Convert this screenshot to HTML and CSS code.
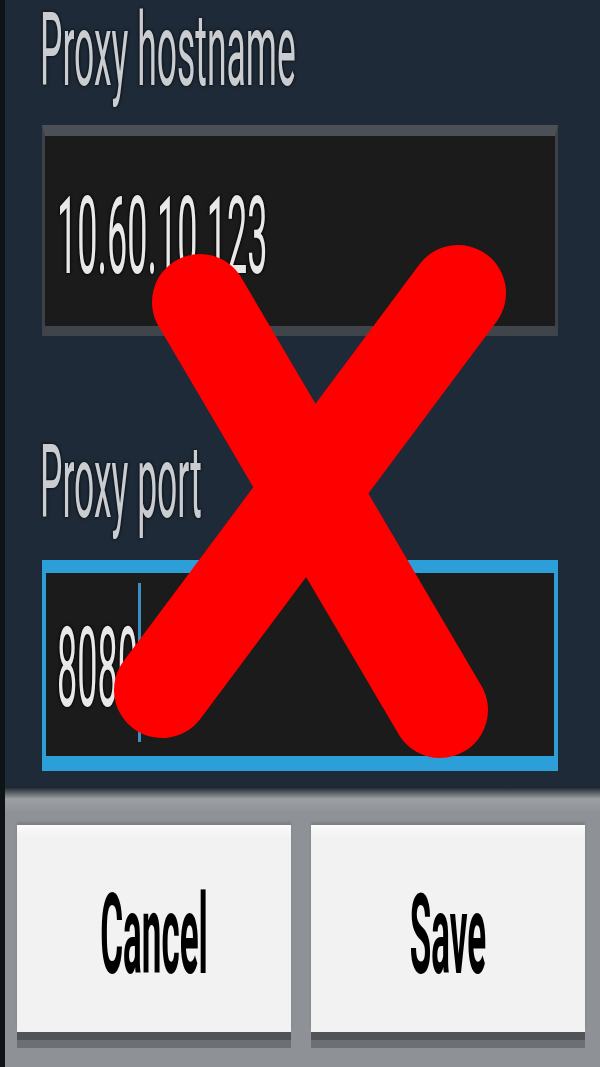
FILE: index.html
```html
<!DOCTYPE html>
<html lang="en">
<head>
    <meta charset="UTF-8">
    <meta name="viewport" content="width=device-width, initial-scale=1.0">
    <title>Proxy settings</title>
    <link rel="stylesheet" href="styles.css">
</head>
<body>
    <div class="page">
        <div class="screen">
            <div class="content">
                <label class="field-label first" for="proxy-host"><span>Proxy hostname</span></label>
                <div class="field" id="proxy-host">
                    <span class="field-text">10.60.10.123</span>
                </div>

                <label class="field-label second" for="proxy-port"><span>Proxy port</span></label>
                <div class="field focused" id="proxy-port">
                    <span class="field-text">8080</span>
                    <span class="cursor"></span>
                </div>
            </div>

            <div class="buttons">
                <button type="button"><span>Cancel</span></button>
                <button type="button"><span>Save</span></button>
            </div>
        </div>

        <!-- big red cross drawn over the dialog -->
        <svg class="cross" viewBox="0 0 600 1067" width="600" height="1067">
            <line x1="200" y1="302" x2="440" y2="710" />
            <line x1="458" y1="293" x2="162" y2="690" />
        </svg>
    </div>
</body>
</html>
```

FILE: styles.css
```css
* {
    box-sizing: border-box;
    margin: 0;
    padding: 0;
}

html, body {
    width: 600px;
    height: 1067px;
    overflow: hidden;
}

body {
    font-family: Roboto, "Noto Sans", Arial, sans-serif;
    background-color: #1e2a37;
}

.page {
    position: relative;
    width: 600px;
    height: 1067px;
}

.screen {
    display: flex;
    flex-direction: column;
    height: 100%;
    border-left: 5px solid #0e1318;
}

.content {
    display: flex;
    flex-direction: column;
    height: 787px;
    padding: 0 42px 0 37px;
    background-color: #1e2a37;
}

.field-label {
    display: block;
    margin-left: -2px;
    color: #c9cdd1;
}

.field-label span {
    display: inline-block;
    font-size: 35.5px;
    line-height: 1;
    transform: scaleY(2.85);
    transform-origin: 0 0;
    text-shadow: 0 0 2px #000;
}

.field-label.first {
    height: 125px;
    padding-top: 2px;
}

.field-label.second {
    height: 224px;
    padding-top: 98px;
}

.field {
    display: flex;
    align-items: flex-start;
    height: 211px;
    padding-left: 12px;
    background-color: #1b1b1b;
    border: 3px solid #3c4248;
    border-top: 11px solid #4a5056;
    border-bottom: 10px solid #3f454b;
}

.field-text {
    display: inline-block;
    margin-top: 47px;
    font-size: 36px;
    line-height: 1;
    color: #e8e8e8;
    transform: scaleY(3);
    transform-origin: 0 0;
    text-shadow: 0 0 2px #000, 0 0 1px #000;
}

.field.focused {
    padding-left: 11px;
    border: 4px solid #2c9ed8;
    border-top-width: 13px;
    border-bottom-width: 15px;
}

.field.focused .field-text {
    margin-top: 40px;
    transform: scaleY(3.1);
}

.cursor {
    display: inline-block;
    width: 3px;
    height: 159px;
    margin-top: 10px;
    background-color: #3a8fc4;
}

.buttons {
    flex: 1;
    display: flex;
    gap: 20px;
    padding: 38px 15px 0 12px;
    background: linear-gradient(#1a232c 0, #9ca0a4 12px, #8e9296 26px);
}

.buttons button {
    flex: 1;
    height: 207px;
    padding-top: 16px;
    display: flex;
    align-items: center;
    justify-content: center;
    background: linear-gradient(#fbfbfb, #f2f2f2 12px);
    border: none;
    font-family: Roboto, Arial, sans-serif;
    font-weight: bold;
    font-size: 35px;
    color: #000;
    box-shadow: 0 8px 0 #505458, 0 16px 0 #6c7074, 0 -3px 2px rgba(0, 0, 0, 0.12);
}

.buttons button span {
    display: inline-block;
    line-height: 1;
    transform: scaleY(3.2);
}

.cross {
    position: absolute;
    top: 0;
    left: 0;
}

.cross line {
    stroke: #ff0000;
    stroke-width: 96;
    stroke-linecap: round;
}
```
